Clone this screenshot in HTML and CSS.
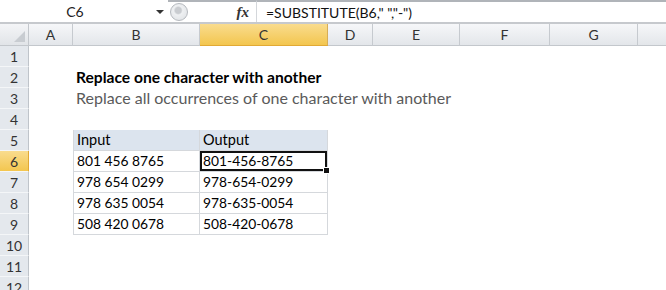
FILE: index.html
```html
<!DOCTYPE html>
<html>
<head>
<meta charset="utf-8">
<link rel="stylesheet" href="styles.css">
</head>
<body>
<div class="app">
  <div class="fbar">
    <div class="namebox"><span class="name">C6</span><span class="dd"></span></div>
    <div class="grip"><span class="knob"></span></div>
    <div class="fx">fx</div>
    <div class="formula">=SUBSTITUTE(B6," ","-")</div>
  </div>
  <div class="sheet">
    <div class="corner"><span class="tri"></span></div>
    <div class="ch">A</div>
    <div class="ch">B</div>
    <div class="ch sel">C</div>
    <div class="ch">D</div>
    <div class="ch">E</div>
    <div class="ch">F</div>
    <div class="ch">G</div>
    <div class="ch last"></div>

    <div class="rh">1</div><div class="row"></div>
    <div class="rh">2</div><div class="row"><div class="c a"></div><div class="c title">Replace one character with another</div></div>
    <div class="rh">3</div><div class="row"><div class="c a"></div><div class="c sub">Replace all occurrences of one character with another</div></div>
    <div class="rh">4</div><div class="row"></div>
    <div class="rh">5</div><div class="row"><div class="c a"></div><div class="c t b hd">Input</div><div class="c t cc hd">Output</div></div>
    <div class="rh sel">6</div><div class="row"><div class="c a"></div><div class="c t b n">801 456 8765</div><div class="c t cc n active">801-456-8765<span class="handle"></span></div></div>
    <div class="rh">7</div><div class="row"><div class="c a"></div><div class="c t b n">978 654 0299</div><div class="c t cc n">978-654-0299</div></div>
    <div class="rh">8</div><div class="row"><div class="c a"></div><div class="c t b n">978 635 0054</div><div class="c t cc n">978-635-0054</div></div>
    <div class="rh">9</div><div class="row"><div class="c a"></div><div class="c t b n">508 420 0678</div><div class="c t cc n">508-420-0678</div></div>
    <div class="rh">10</div><div class="row"></div>
    <div class="rh">11</div><div class="row"></div>
    <div class="rh">12</div><div class="row"></div>
  </div>
</div>
</body>
</html>
```
FILE: styles.css
```css
* { box-sizing: border-box; }
html, body { margin: 0; padding: 0; background: #fff; }
body { width: 666px; height: 290px; overflow: hidden; font-family: Lato, "Open Sans", sans-serif; }

.fbar {
  height: 24px;
  display: flex;
  align-items: stretch;
  border-bottom: 2px solid #c6c9cd;
  background: #fff;
}
.namebox {
  width: 168px;
  position: relative;
  display: flex;
  align-items: center;
  justify-content: center;
}
.name { font-size: 14px; color: #222; padding-right: 18px; }
.dd {
  position: absolute; right: 4px; top: 10px;
  width: 0; height: 0;
  border-left: 4px solid transparent; border-right: 4px solid transparent;
  border-top: 4px solid #333;
}
.grip {
  width: 60px;
  border-top: 2px solid #b0b4b9;
  display: flex; align-items: center;
  padding-left: 2px;
}
.knob {
  width: 18px; height: 18px; border-radius: 9px;
  border: 1px solid #b5b9be;
  background: radial-gradient(circle at 45% 40%, #c9ccd0 0 3px, #eef0f2 4.5px, #dde0e3 100%);
}
.fx {
  width: 28px;
  border-top: 2px solid #b0b4b9;
  font-family: "Liberation Serif", serif; font-style: italic; font-weight: bold;
  font-size: 15px; color: #333;
  display: flex; align-items: center; justify-content: flex-end; padding-right: 7px;
}
.formula {
  flex: 1;
  border-top: 2px solid #b0b4b9;
  border-left: 1px solid #d4d7db;
  padding-left: 9px;
  font-size: 14px; color: #111;
  display: flex; align-items: center;
}

.sheet {
  display: grid;
  grid-template-columns: 29px 44px 127px 128px 45px 87px 90px 88px 1fr;
  grid-template-rows: 22px repeat(12, 21px);
}
.corner {
  background: linear-gradient(#f4f5f7, #e1e4e8);
  border-right: 1px solid #c3c7cc; border-bottom: 1px solid #c3c7cc;
  position: relative;
}
.tri {
  position: absolute; right: 3px; bottom: 3px; width: 0; height: 0;
  border-left: 11px solid transparent; border-bottom: 11px solid #c8ccd1;
}
.ch {
  background: linear-gradient(#f6f7f9, #e3e6ea);
  border-right: 1px solid #c6cacf; border-bottom: 1px solid #c3c7cc;
  font-size: 14px; color: #333;
  display: flex; align-items: center; justify-content: center;
}
.ch.sel { background: linear-gradient(#f9dc8e, #f3c64f); border-bottom-color: #e1a935; border-right-color: #d6ad57; }
.ch.last { border-right: none; }
.rh {
  grid-column: 1;
  background: #e4e8ed;
  border-right: 1px solid #bfc4ca; border-bottom: 1px solid #f4f6f8;
  font-size: 14px; color: #333;
  display: flex; align-items: center; justify-content: center;
}
.rh.sel { background: linear-gradient(#f9dc8e, #f3c64f); border-right-color: #e1a935; }
.row {
  grid-column: 2 / -1;
  display: grid;
  grid-template-columns: 44px 127px 128px 1fr;
}
.c { font-size: 14.5px; color: #000; padding-left: 3px; display: flex; align-items: flex-end; padding-bottom: 2px; white-space: nowrap; }
.n { font-size: 13.8px; }
.title { font-weight: bold; grid-column: 2 / -1; font-size: 15.6px; }
.sub { color: #5a5a5a; grid-column: 2 / -1; font-size: 16px; }
.t { border-right: 1px solid #d5d8dc; border-bottom: 1px solid #d5d8dc; }
.t.b { border-left: 1px solid #d5d8dc; }
.hd { background: #dce4ee; }
.active { position: relative; box-shadow: inset 0 0 0 2px #111; }
.handle { position: absolute; right: -3px; bottom: -3px; width: 5px; height: 5px; background: #111; border: 1px solid #fff; box-sizing: content-box; }
```
